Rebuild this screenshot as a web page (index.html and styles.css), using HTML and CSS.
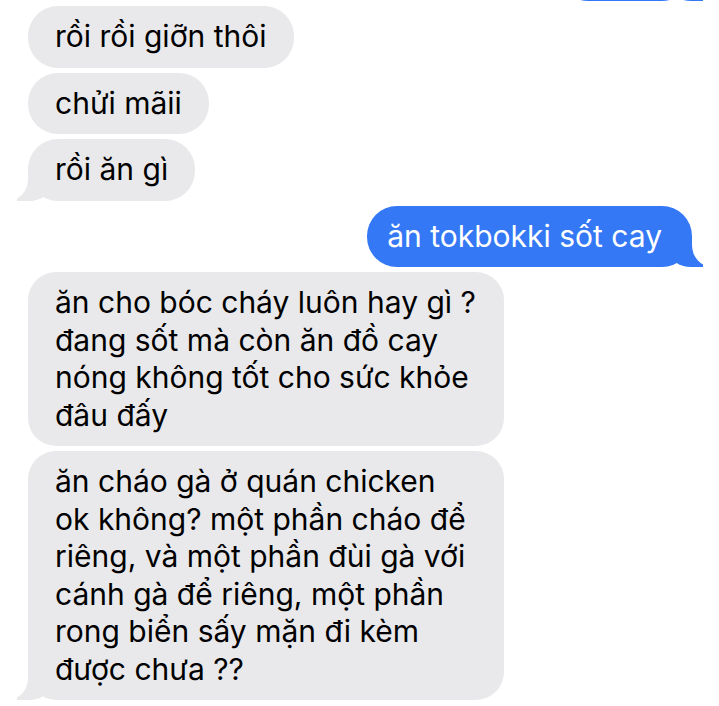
FILE: index.html
```html
<!DOCTYPE html>
<html lang="vi">
<head>
<meta charset="utf-8">
<title>Tin nhắn</title>
<link rel="stylesheet" href="styles.css">
</head>
<body>
<main class="thread">
  <div class="bubble sent tail partial"></div>
  <div class="bubble recv">rồi rồi giỡn thôi</div>
  <div class="bubble recv">chửi mãii</div>
  <div class="bubble recv tail">rồi ăn gì</div>
  <div class="bubble sent tail">ăn tokbokki sốt cay</div>
  <div class="bubble recv long">ăn cho bóc cháy luôn hay gì ?<br>đang sốt mà còn ăn đồ cay<br>nóng không tốt cho sức khỏe<br>đâu đấy</div>
  <div class="bubble recv long tail">ăn cháo gà ở quán chicken<br>ok không? một phần cháo để<br>riêng, và một phần đùi gà với<br>cánh gà để riêng, một phần<br>rong biển sấy mặn đi kèm<br>được chưa ??</div>
</main>
</body>
</html>
```
FILE: styles.css
```css
html, body {
  margin: 0;
  background: #ffffff;
}

body {
  font-family: Inter, "Noto Sans", sans-serif;
  -webkit-font-smoothing: antialiased;
}

.thread {
  display: flex;
  flex-direction: column;
  gap: 5px;
  margin-top: -60px;
  padding: 0 27px 0 28px;
}

.bubble {
  position: relative;
  box-sizing: border-box;
  max-width: 476px;
  min-height: 61px;
  padding: 12px 27px;
  border-radius: 30px;
  font-size: 30px;
  line-height: 37.5px;
  white-space: nowrap;
}

.recv {
  align-self: flex-start;
  background: #e9e9eb;
  color: #000000;
}

.sent {
  align-self: flex-end;
  background: #3478f6;
  color: #ffffff;
  padding: 12px 30px 12px 20px;
}

.long {
  width: 476px;
  border-radius: 28px;
}

.partial {
  width: 134px;
}

/* tails */
.tail::before,
.tail::after {
  content: "";
  position: absolute;
  bottom: 0;
  height: 30px;
}

.recv.tail::before {
  left: -11px;
  width: 34px;
  background: #e9e9eb;
  border-bottom-right-radius: 22px 16px;
}

.recv.tail::after {
  left: -40px;
  width: 40px;
  background: #ffffff;
  border-bottom-right-radius: 20px 22px;
}

.sent.tail::before {
  right: -11px;
  width: 34px;
  background: #3478f6;
  border-bottom-left-radius: 22px 16px;
}

.sent.tail::after {
  right: -40px;
  width: 40px;
  background: #ffffff;
  border-bottom-left-radius: 20px 22px;
}
```
